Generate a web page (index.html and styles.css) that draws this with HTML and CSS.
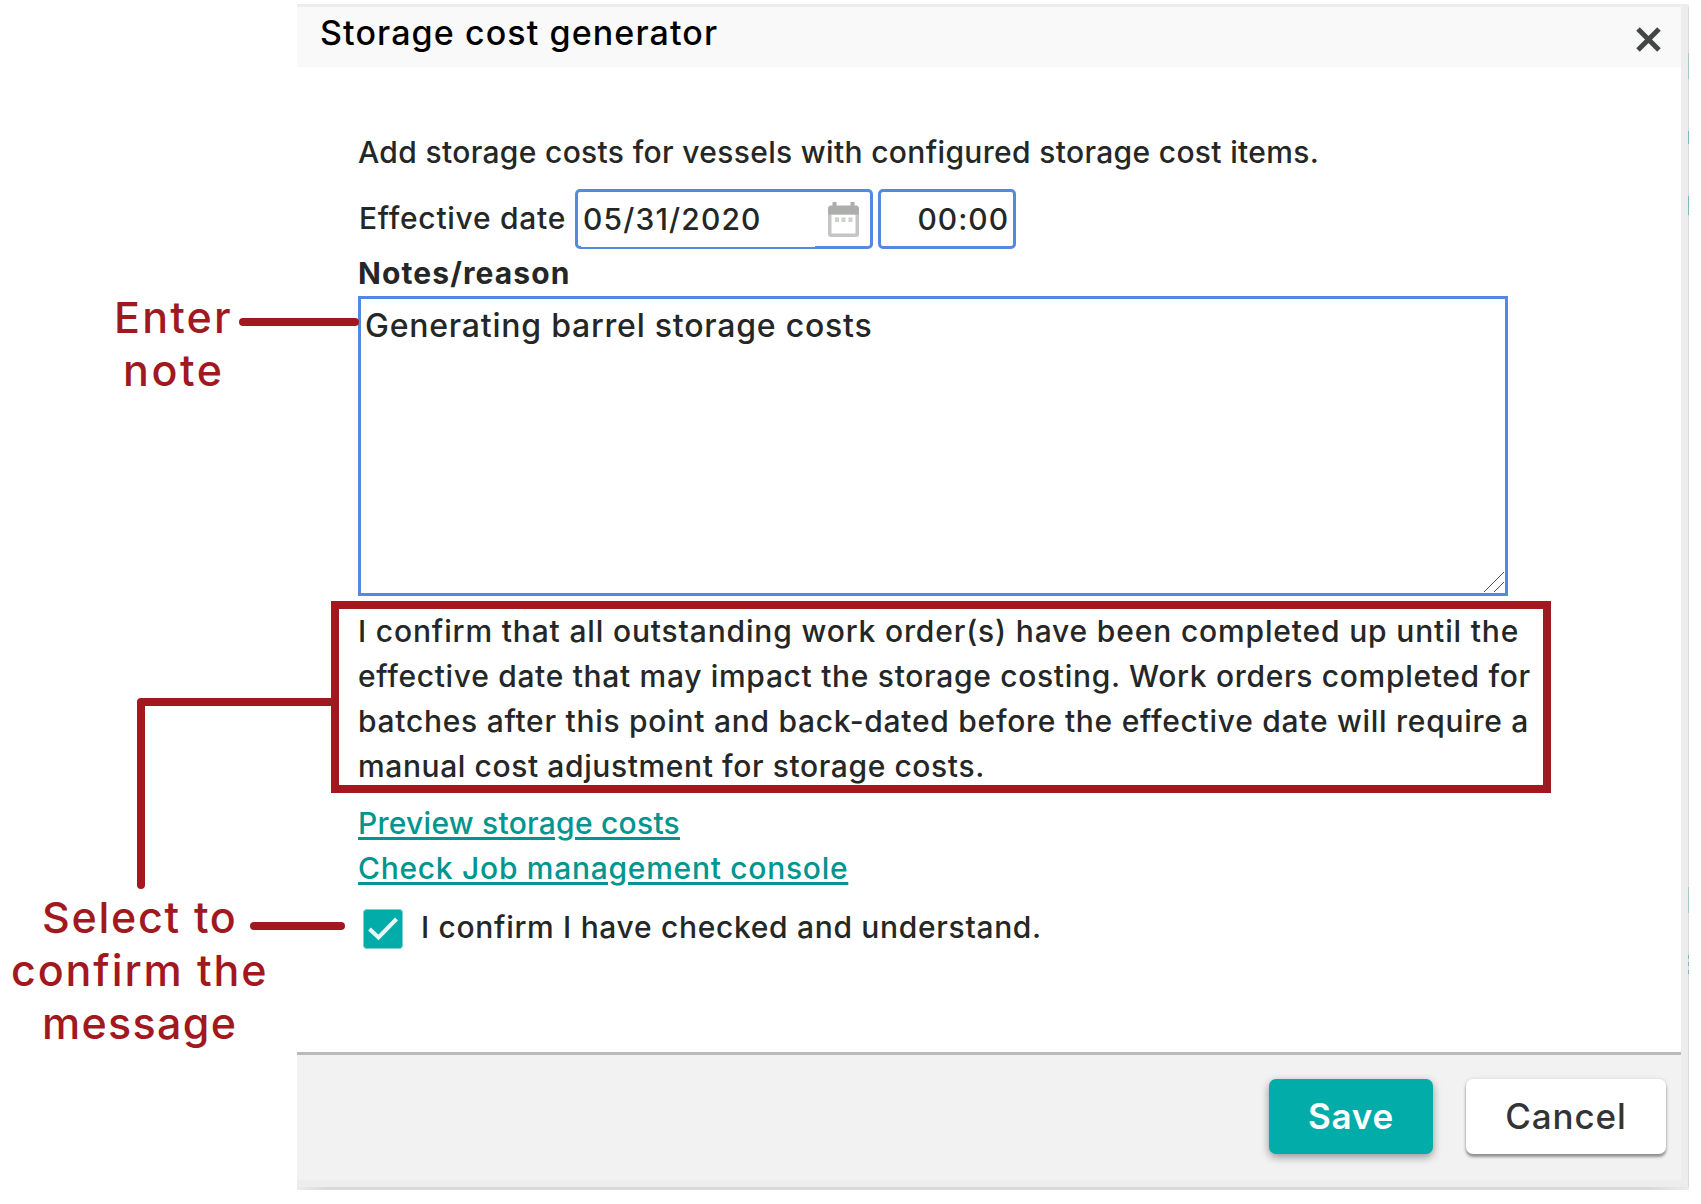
FILE: index.html
```html
<!DOCTYPE html>
<html lang="en">
<head>
<meta charset="utf-8">
<title>Storage cost generator</title>
<link rel="stylesheet" href="styles.css">
</head>
<body>
<div class="page">
  <aside class="notes">
    <div class="note note-enter">
      <span class="ls-enter">Enter</span>
      <span class="ls-note">note</span>
    </div>
    <div class="note note-select">
      <span class="ls-select">Select to</span>
      <span class="ls-confirm">confirm the</span>
      <span class="ls-message">message</span>
    </div>
  </aside>

  <section class="dialog">
    <div class="frame">
      <header class="header">
        <h1 class="title">Storage cost generator</h1>
        <svg class="close" viewBox="0 0 27 27"><path d="M3 3L24 24M24 3L3 24"/></svg>
      </header>

      <main class="content">
        <p class="line ls-add">Add storage costs for vessels with configured storage cost items.</p>
        <div class="date-row">
          <label class="label">Effective date</label>
          <div class="field date-field">
            <span>05/31/2020</span>
            <svg class="calendar" viewBox="0 0 31 35">
              <path fill="#c4c5c4" fill-rule="evenodd" d="M2 4H29Q31 4 31 6V32Q31 35 28 35H3Q0 35 0 32V6Q0 4 2 4ZM3.5 12.500V31.500H27.500V12.500Z"/>
              <path fill="#acaeac" d="M2 3.500H4.500V0H8.500V3.500H22.500V0H26.500V3.500H29L31 6V12.500H0V6Z"/>
              <path fill="#cfcfcf" d="M7 15.500H11V20H7ZM13.500 15.500H17.500V20H13.500ZM20.500 15.500H24.500V20H20.500Z"/>
            </svg>
          </div>
          <div class="field time-field"><span>00:00</span></div>
        </div>
        <p class="line heading">Notes/reason</p>
        <div class="textarea">
          <span>Generating barrel storage costs</span>
          <svg class="grip" viewBox="0 0 20 20"><path d="M0 20L20 0M10 20L20 10"/></svg>
        </div>
        <div class="statement">
          <span class="ls-s1">I confirm that all outstanding work order(s) have been completed up until the</span>
          <span class="ls-s2">effective date that may impact the storage costing. Work orders completed for</span>
          <span class="ls-s3">batches after this point and back-dated before the effective date will require a</span>
          <span class="ls-s4">manual cost adjustment for storage costs.</span>
        </div>
        <nav class="links">
          <a class="link ls-preview">Preview storage costs</a>
          <a class="link ls-check">Check Job management console</a>
        </nav>
        <div class="confirm">
          <svg class="checkbox" viewBox="0 0 40 40">
            <rect x=".5" y=".5" width="39" height="39" rx="3" fill="#02aca9" stroke="#7fd0ce"/>
            <path d="M6.500 20L15.500 28.500L33.500 10" fill="none" stroke="#e8f7f6" stroke-width="4"/>
          </svg>
          <span class="confirm-text">I confirm I have checked and understand.</span>
        </div>
      </main>

      <footer class="footer">
        <div class="button save">Save</div>
        <div class="button cancel">Cancel</div>
      </footer>
    </div>
    <div class="shade"></div>
  </section>

  <svg class="edge" viewBox="0 0 1 1204" preserveAspectRatio="none">
    <path stroke="#dadada" d="M.5 7V1187"/>
    <path stroke="#a3c9c8" d="M.5 53V79M.5 887V913"/>
    <path stroke="#7dbab8" d="M.5 131V144M.5 196V215M.5 955V959M.5 962V966M.5 970V974"/>
  </svg>
  <svg class="connectors" viewBox="0 0 1701 1204">
    <path d="M243 322H355M335 702H141V885M254 926H341"/>
  </svg>
</div>
</body>
</html>
```
FILE: styles.css
```css
* { box-sizing: border-box; }

body {
  margin: 0;
  background: #fff;
  color: #252727;
  font: 500 30px/45px Inter, "Open Sans", sans-serif;
}

p, h1 { margin: 0; }
svg { display: block; }

.page {
  position: relative;
  display: flex;
  width: 1701px;
  height: 1204px;
  overflow: hidden;
  white-space: nowrap;
}

/* Callouts */
.notes {
  flex: none;
  width: 297px;
  padding-top: 291px;
  color: #a2181f;
  font-size: 43px;
  line-height: 53px;
}
.note { display: flex; flex-direction: column; }
.note-enter { padding-left: 114px; }
.note-enter .ls-note { padding-left: 9px; }
.note-select { margin-top: 494px; padding-left: 11px; }
.note-select .ls-select,
.note-select .ls-message { padding-left: 31px; }

/* Dialog */
.dialog {
  flex: none;
  width: 1392px;
  margin-top: 4px;
}
.frame {
  height: 1183px;
  border: solid #ededed;
  border-width: 3px 8px 7px 0;
  display: flex;
  flex-direction: column;
}
.shade {
  height: 3px;
  background: linear-gradient(90deg, #ebebeb, #d9d9d9 30px, #d9d9d9 1350px, #ebebeb);
}

.header {
  flex: none;
  display: flex;
  justify-content: space-between;
  height: 60px;
  padding: 0 19px 0 23px;
  background: #f9f9f9;
}
.title {
  color: #000;
  font-size: 34px;
  font-weight: 500;
  line-height: 52px;
  letter-spacing: 1.1px;
}
.close { width: 27px; height: 27px; margin-top: 19px; }
.close path { fill: none; stroke: #444646; stroke-width: 5; }

.content {
  flex: 1;
  min-height: 0;
  padding: 63px 0 0 61px;
}

.date-row {
  display: flex;
  align-items: center;
  height: 60px;
  margin-top: 14px;
}
.label { width: 217px; margin-top: -2px; padding-left: 1px; letter-spacing: .72px; }
.field {
  display: flex;
  align-items: center;
  height: 60px;
  border: 3px solid #5588e0;
  border-radius: 5px;
}
.date-field {
  position: relative;
  justify-content: space-between;
  width: 298px;
  margin-right: 5px;
  padding: 0 11px 0 5px;
  letter-spacing: 1.15px;
}
/* The text part of the date field overlaps the border by a pixel */
.date-field::after {
  content: "";
  position: absolute;
  left: 3px;
  bottom: -1px;
  width: 234px;
  height: 1px;
  background: #fff;
}
.calendar { width: 31px; height: 35px; }
.time-field {
  justify-content: flex-end;
  width: 138px;
  padding-right: 4px;
  letter-spacing: 1px;
}

.heading { margin-top: 2px; font-weight: 700; letter-spacing: 1.1px; }

.textarea {
  position: relative;
  width: 1150px;
  height: 300px;
  padding: 4px 0 0 4px;
  border: 3px solid #5588e0;
  font-size: 32px;
  letter-spacing: .77px;
}
.grip { position: absolute; right: 1px; bottom: 1px; width: 20px; height: 20px; }
.grip path { fill: none; stroke: #555; stroke-width: 1; }

.statement {
  display: flex;
  flex-direction: column;
  width: 1220px;
  height: 192px;
  margin: 5px 0 0 -27px;
  padding-left: 19px;
  border: 8px solid #a2181f;
}

.links {
  display: flex;
  flex-direction: column;
  align-items: flex-start;
  margin-top: 8px;
}
.link {
  color: #00958e;
  text-decoration: underline;
  text-decoration-thickness: 3px;
  text-underline-offset: 3px;
}

.confirm {
  display: flex;
  align-items: center;
  gap: 18px;
  height: 40px;
  margin: 18px 0 0 5px;
  letter-spacing: .68px;
}
.confirm-text { margin-top: -3px; }
.checkbox { width: 40px; height: 40px; }

.footer {
  flex: none;
  display: flex;
  justify-content: flex-end;
  gap: 33px;
  height: 128px;
  padding: 24px 15px 0 0;
  border-top: 3px solid #bababa;
  background: #f2f2f2;
}
.button {
  height: 75px;
  border-radius: 7px;
  font-size: 35px;
  line-height: 75px;
  text-align: center;
}
.save {
  width: 164px;
  background: #02aca9;
  color: #fff;
  font-weight: 600;
  letter-spacing: .8px;
  box-shadow: 0 3px 9px rgba(0, 0, 0, .4);
}
.cancel {
  width: 200px;
  background: #fff;
  color: #333436;
  letter-spacing: .9px;
  box-shadow: 0 3px 3px rgba(0, 0, 0, .38), 0 0 4px rgba(0, 0, 0, .12);
}

/* Lines drawn over the dialog */
.connectors { position: absolute; left: 0; top: 0; width: 1701px; height: 1204px; }
.connectors path {
  fill: none;
  stroke: #a2181f;
  stroke-width: 8;
  stroke-linecap: round;
  stroke-linejoin: round;
}
.edge { position: absolute; left: 1688px; top: 0; width: 1px; height: 1204px; }

/* Tracking */
.ls-enter { letter-spacing: 2.2px; }
.ls-note { letter-spacing: 2.6px; }
.ls-select { letter-spacing: 1.7px; }
.ls-confirm { letter-spacing: 1.9px; }
.ls-message { letter-spacing: 1.3px; }
.ls-add { letter-spacing: .33px; }
.ls-s1 { letter-spacing: .84px; }
.ls-s2 { letter-spacing: .68px; }
.ls-s3 { letter-spacing: .72px; }
.ls-s4 { letter-spacing: .6px; }
.ls-preview { letter-spacing: .25px; }
.ls-check { letter-spacing: .72px; }
```
